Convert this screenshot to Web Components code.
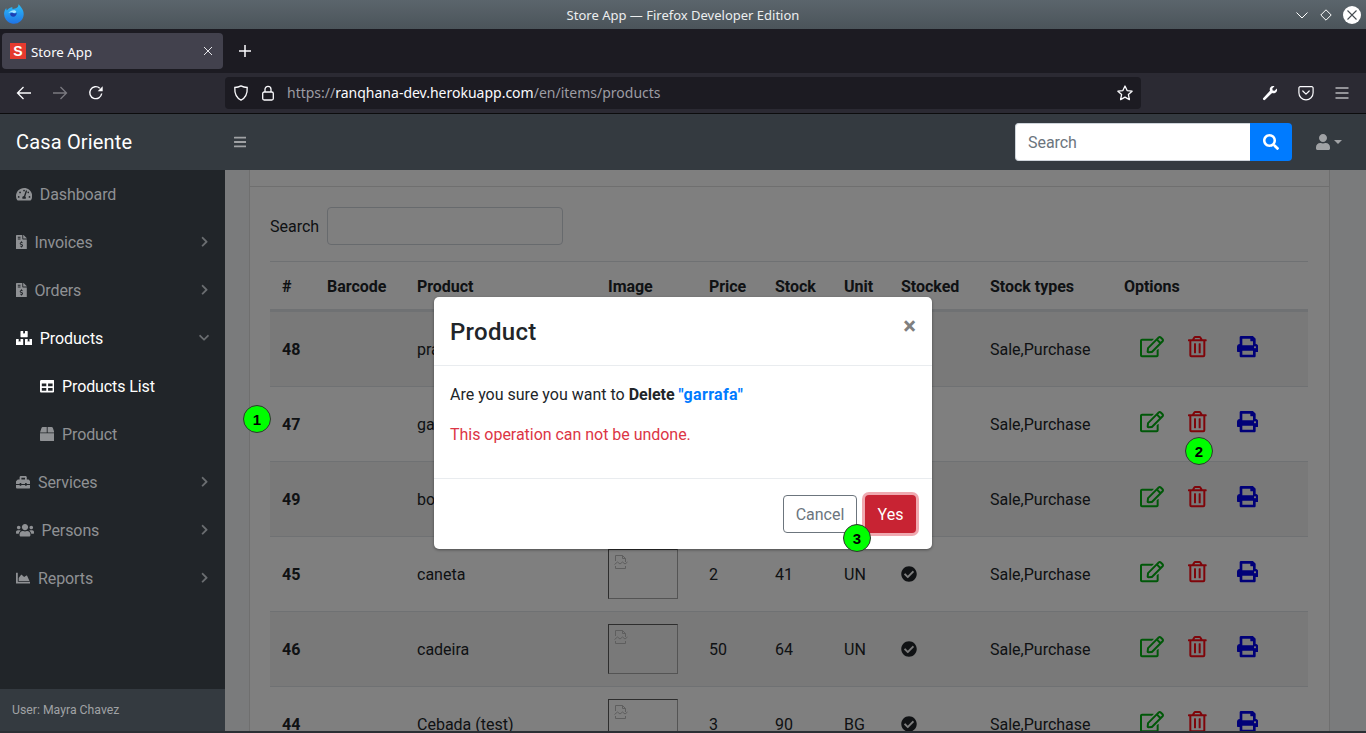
<!DOCTYPE html>
<html lang="en">
<head>
<meta charset="utf-8">
<title>Store App</title>
<style>
	html, body { margin: 0; height: 733px; overflow: hidden; background: #2b2f34; font-family: Roboto, "Liberation Sans", sans-serif; }
</style>
</head>
<body>
<browser-frame></browser-frame>
<app-shell>
	<app-navbar slot="top"></app-navbar>
	<app-sidebar slot="side">
		<side-item icon="tachometer" label="Dashboard"></side-item>
		<side-item icon="invoice" label="Invoices" arrow="right"></side-item>
		<side-item icon="invoice" label="Orders" arrow="right"></side-item>
		<side-item icon="boxes" label="Products" arrow="down" active></side-item>
		<side-item icon="table" label="Products List" sub active></side-item>
		<side-item icon="box" label="Product" sub></side-item>
		<side-item icon="toolbox" label="Services" arrow="right"></side-item>
		<side-item icon="users" label="Persons" arrow="right"></side-item>
		<side-item icon="chart" label="Reports" arrow="right"></side-item>
	</app-sidebar>
	<product-card></product-card>
	<confirm-modal slot="over"></confirm-modal>
	<step-badge slot="over" style="left:243px;top:291px">1</step-badge>
	<step-badge slot="over" style="left:1185px;top:323px">2</step-badge>
	<step-badge slot="over" style="left:843px;top:410px">3</step-badge>
</app-shell>
<script>
const ICONS = {
	bars: [448,"M16 132h416c8.837 0 16-7.163 16-16V76c0-8.837-7.163-16-16-16H16C7.163 60 0 67.163 0 76v40c0 8.837 7.163 16 16 16zm0 160h416c8.837 0 16-7.163 16-16v-40c0-8.837-7.163-16-16-16H16c-8.837 0-16 7.163-16 16v40c0 8.837 7.163 16 16 16zm0 160h416c8.837 0 16-7.163 16-16v-40c0-8.837-7.163-16-16-16H16c-8.837 0-16 7.163-16 16v40c0 8.837 7.163 16 16 16z"],
	search: [512,"M505 442.7L405.3 343c-4.5-4.5-10.6-7-17-7H372c27.6-35.3 44-79.7 44-128C416 93.1 322.9 0 208 0S0 93.1 0 208s93.1 208 208 208c48.3 0 92.7-16.4 128-44v16.3c0 6.4 2.5 12.5 7 17l99.7 99.7c9.4 9.4 24.6 9.4 33.9 0l28.3-28.3c9.4-9.4 9.4-24.6.1-34zM208 336c-70.7 0-128-57.2-128-128 0-70.7 57.2-128 128-128 70.7 0 128 57.2 128 128 0 70.7-57.2 128-128 128z"],
	user: [448,"M224 256c70.7 0 128-57.3 128-128S294.7 0 224 0 96 57.3 96 128s57.3 128 128 128zm89.6 32h-16.7c-22.2 10.2-46.9 16-72.9 16s-50.6-5.8-72.9-16h-16.7C60.2 288 0 348.2 0 422.4V464c0 26.5 21.5 48 48 48h352c26.5 0 48-21.5 48-48v-41.6c0-74.2-60.2-134.4-134.4-134.4z"],
	check: [512,"M504 256c0 136.967-111.033 248-248 248S8 392.967 8 256 119.033 8 256 8s248 111.033 248 248zM227.314 387.314l184-184c6.248-6.248 6.248-16.379 0-22.627l-22.627-22.627c-6.248-6.249-16.379-6.249-22.628 0L216 308.118l-70.059-70.059c-6.248-6.248-16.379-6.248-22.628 0l-22.627 22.627c-6.248 6.248-6.248 16.379 0 22.627l104 104c6.249 6.249 16.379 6.249 22.628.001z"],
	right: [320,"M285.476 272.971L91.132 467.314c-9.373 9.373-24.569 9.373-33.941 0l-22.667-22.667c-9.357-9.357-9.375-24.522-.04-33.901L188.505 256 34.484 101.255c-9.335-9.379-9.317-24.544.04-33.901l22.667-22.667c9.373-9.373 24.569-9.373 33.941 0L285.475 239.03c9.373 9.372 9.373 24.568.001 33.941z"],
	down: [448,"M207.029 381.476L12.686 187.132c-9.373-9.373-9.373-24.569 0-33.941l22.667-22.667c9.357-9.357 24.522-9.375 33.901-.04L224 284.505l154.745-154.021c9.379-9.335 24.544-9.317 33.901.04l22.667 22.667c9.373 9.373 9.373 24.569 0 33.941L240.971 381.476c-9.373 9.372-24.569 9.372-33.942 0z"],
	edit: [576,"M402.3 344.9l32-32c5-5 13.7-1.5 13.7 5.7V464c0 26.5-21.5 48-48 48H48c-26.5 0-48-21.5-48-48V112c0-26.5 21.5-48 48-48h273.5c7.1 0 10.7 8.6 5.7 13.7l-32 32c-1.5 1.5-3.5 2.3-5.7 2.3H48v352h352V350.5c0-2.1.8-4.1 2.3-5.6zm156.6-201.8L296.3 405.7l-90.4 10c-26.2 2.9-48.5-19.2-45.6-45.6l10-90.4L432.9 17.1c22.9-22.9 59.9-22.9 82.7 0l43.2 43.2c22.9 22.9 22.9 60 .1 82.8zM460.1 174L402 115.9 216.2 301.8l-7.3 65.3 65.3-7.3L460.1 174zm64.8-79.7l-43.2-43.2c-4.1-4.1-10.8-4.1-14.8 0L436 82l58.1 58.1 30.9-30.9c4-4.2 4-10.8-.1-14.9z"],
	trash: [448,"M268 416h24a12 12 0 0 0 12-12V188a12 12 0 0 0-12-12h-24a12 12 0 0 0-12 12v216a12 12 0 0 0 12 12zM432 80h-82.41l-34-56.7A48 48 0 0 0 274.41 0H173.59a48 48 0 0 0-41.16 23.3L98.41 80H16A16 16 0 0 0 0 96v16a16 16 0 0 0 16 16h16v336a48 48 0 0 0 48 48h288a48 48 0 0 0 48-48V128h16a16 16 0 0 0 16-16V96a16 16 0 0 0-16-16zM171.84 50.91A6 6 0 0 1 177 48h94a6 6 0 0 1 5.15 2.91L293.61 80H154.39zM368 464H80V128h288zm-212-48h24a12 12 0 0 0 12-12V188a12 12 0 0 0-12-12h-24a12 12 0 0 0-12 12v216a12 12 0 0 0 12 12z"],
	print: [512,"M448 192V77.25c0-8.49-3.37-16.62-9.37-22.63L393.37 9.37c-6-6-14.14-9.37-22.63-9.37H96C78.33 0 64 14.33 64 32v160c-35.35 0-64 28.65-64 64v112c0 8.84 7.16 16 16 16h48v96c0 17.67 14.33 32 32 32h320c17.67 0 32-14.33 32-32v-96h48c8.84 0 16-7.16 16-16V256c0-35.35-28.65-64-64-64zm-64 256H128v-96h256v96zm0-224H128V64h192v48c0 8.84 7.16 16 16 16h48v96zm48 72c-13.25 0-24-10.75-24-24 0-13.26 10.75-24 24-24s24 10.74 24 24c0 13.25-10.75 24-24 24z"],
	invoice: [384,"M377 105L279.1 7c-4.5-4.5-10.6-7-17-7H256v128h128v-6.1c0-6.3-2.5-12.4-7-16.9zm-153 31V0H24C10.7 0 0 10.7 0 24v464c0 13.3 10.7 24 24 24h336c13.3 0 24-10.7 24-24V160H248c-13.2 0-24-10.8-24-24zM64 72c0-4.42 3.58-8 8-8h80c4.42 0 8 3.58 8 8v16c0 4.42-3.58 8-8 8H72c-4.42 0-8-3.58-8-8V72zm0 80v-16c0-4.42 3.58-8 8-8h80c4.42 0 8 3.58 8 8v16c0 4.42-3.58 8-8 8H72c-4.42 0-8-3.58-8-8zm144 263.88V440c0 4.42-3.58 8-8 8h-16c-4.42 0-8-3.58-8-8v-24.29c-11.29-.58-22.27-4.52-31.37-11.35-3.9-2.93-4.1-8.77-.57-12.14l11.75-11.21c2.77-2.64 6.89-2.76 10.13-.73 3.87 2.42 8.26 3.72 12.82 3.72h28.11c6.5 0 11.8-5.92 11.8-13.19 0-5.95-3.61-11.19-8.77-12.73l-45-13.5c-18.59-5.58-31.58-23.42-31.58-43.39 0-24.52 19.05-44.44 42.67-45.07V232c0-4.42 3.58-8 8-8h16c4.42 0 8 3.58 8 8v24.29c11.29.58 22.27 4.51 31.37 11.35 3.9 2.93 4.1 8.77.57 12.14l-11.75 11.21c-2.77 2.64-6.89 2.76-10.13.73-3.87-2.43-8.26-3.72-12.82-3.72h-28.11c-6.5 0-11.8 5.92-11.8 13.19 0 5.95 3.61 11.19 8.77 12.73l45 13.5c18.59 5.58 31.58 23.42 31.58 43.39 0 24.53-19.05 44.44-42.67 45.07z"],
	tachometer: [576,"M288 32C128.94 32 0 160.94 0 320c0 52.8 14.25 102.26 39.06 144.8 5.61 9.62 16.3 15.2 27.44 15.2h443c11.14 0 21.83-5.58 27.44-15.2C561.75 422.26 576 372.8 576 320c0-159.06-128.94-288-288-288zm0 64c14.71 0 26.58 10.13 30.32 23.65-1.11 2.26-2.64 4.23-3.45 6.67l-9.22 27.67c-5.13 3.49-10.97 6.01-17.64 6.01-17.67 0-32-14.33-32-32S270.33 96 288 96zM96 384c-17.67 0-32-14.33-32-32s14.33-32 32-32 32 14.33 32 32-14.33 32-32 32zm48-160c-17.67 0-32-14.33-32-32s14.33-32 32-32 32 14.33 32 32-14.33 32-32 32zm246.77-72.41l-61.33 184C343.13 347.33 352 364.54 352 384c0 11.72-3.38 22.55-8.88 32H232.88c-5.5-9.45-8.88-20.28-8.88-32 0-33.94 26.5-61.43 59.9-63.59l61.34-184.01c4.17-12.56 17.73-19.45 30.36-15.17 12.57 4.19 19.35 17.77 15.17 30.36zm14.66 57.2l15.52-46.55c3.47-1.29 7.13-2.23 11.05-2.23 17.67 0 32 14.33 32 32s-14.33 32-32 32c-11.38-.01-20.89-6.28-26.57-15.22zM480 384c-17.67 0-32-14.33-32-32s14.33-32 32-32 32 14.33 32 32-14.33 32-32 32z"],
	boxes: [576,"M560 288h-80v96l-32-21.3-32 21.3v-96h-80c-8.8 0-16 7.2-16 16v192c0 8.8 7.2 16 16 16h224c8.8 0 16-7.2 16-16V304c0-8.8-7.2-16-16-16zm-384-64h224c8.8 0 16-7.2 16-16V16c0-8.8-7.2-16-16-16h-80v96l-32-21.3L256 96V0h-80c-8.8 0-16 7.2-16 16v192c0 8.8 7.2 16 16 16zm64 64h-80v96l-32-21.3L96 384v-96H16c-8.8 0-16 7.2-16 16v192c0 8.8 7.2 16 16 16h224c8.8 0 16-7.2 16-16V304c0-8.8-7.2-16-16-16z"],
	table: [512,"M464 32H48C21.49 32 0 53.49 0 80v352c0 26.51 21.49 48 48 48h416c26.51 0 48-21.49 48-48V80c0-26.51-21.49-48-48-48zM224 416H64v-96h160v96zm0-160H64v-96h160v96zm224 160H288v-96h160v96zm0-160H288v-96h160v96z"],
	box: [512,"M509.5 184.6L458.9 32.8C452.4 13.2 434.1 0 413.4 0H272v192h238.7c-.4-2.5-.4-5-1.2-7.4zM240 0H98.6c-20.7 0-39 13.2-45.5 32.8L2.5 184.6c-.8 2.4-.8 4.9-1.2 7.4H240V0zM0 224v240c0 26.5 21.5 48 48 48h416c26.5 0 48-21.5 48-48V224H0z"],
	toolbox: [512,"M502.63 214.63l-45.25-45.25c-6-6-14.14-9.37-22.63-9.37H384V80c0-26.51-21.49-48-48-48H176c-26.51 0-48 21.49-48 48v80H77.25c-8.49 0-16.62 3.37-22.63 9.37L9.37 214.63c-6 6-9.37 14.14-9.37 22.63V320h128v-16c0-8.84 7.16-16 16-16h32c8.84 0 16 7.16 16 16v16h128v-16c0-8.84 7.16-16 16-16h32c8.84 0 16 7.16 16 16v16h128v-82.75c0-8.48-3.37-16.62-9.37-22.62zM320 160H192V96h128v64zm64 208c0 8.84-7.16 16-16 16h-32c-8.84 0-16-7.16-16-16v-16H192v16c0 8.84-7.16 16-16 16h-32c-8.84 0-16-7.16-16-16v-16H0v96c0 17.67 14.33 32 32 32h448c17.67 0 32-14.33 32-32v-96H384v16z"],
	users: [640,"M96 224c35.3 0 64-28.7 64-64s-28.7-64-64-64-64 28.7-64 64 28.7 64 64 64zm448 0c35.3 0 64-28.7 64-64s-28.7-64-64-64-64 28.7-64 64 28.7 64 64 64zm32 32h-64c-17.6 0-33.5 7.1-45.1 18.6 40.3 22.1 68.9 62 75.1 109.4h66c17.7 0 32-14.3 32-32v-32c0-35.3-28.7-64-64-64zm-256 0c61.9 0 112-50.1 112-112S381.9 32 320 32 208 82.1 208 144s50.1 112 112 112zm76.8 32h-8.3c-20.8 10-43.9 16-68.5 16s-47.6-6-68.5-16h-8.3C179.6 288 128 339.6 128 403.2V432c0 26.5 21.5 48 48 48h288c26.5 0 48-21.5 48-48v-28.8c0-63.6-51.6-115.2-115.2-115.2zm-223.7-13.4C161.5 263.1 145.6 256 128 256H64c-35.3 0-64 28.7-64 64v32c0 17.7 14.3 32 32 32h65.9c6.3-47.4 34.9-87.3 75.2-109.4z"],
	chart: [512,"M500 384c6.6 0 12 5.4 12 12v40c0 6.6-5.4 12-12 12H12c-6.6 0-12-5.4-12-12V76c0-6.6 5.4-12 12-12h40c6.6 0 12 5.4 12 12v308h436zM96 352V248l86-112c5-7 15-7 20 0l86 80 85-56c8-5 18-2 22 6l85 186z"]
};

/** returns the svg markup of a named icon at the given font-size */
function icon(name,size){
	const [w,d] = ICONS[name];
	return `<svg width="${w/512*size}" height="${size}" viewBox="0 0 ${w} 512" fill="currentColor" style="display:block;flex:none"><path d="${d}"/></svg>`;
}

class BrowserFrame extends HTMLElement {
	constructor(){
		super();
		this.attachShadow({mode:"open"});
		this.shadowRoot.innerHTML = /*html*/`
			<style>
				:host {
					display: block;
					font-family: "Noto Sans", sans-serif;
					color: #fbfbfe;
				}
				svg { display: block; flex: none; }
				.title {
					height: 29px;
					display: flex;
					align-items: center;
					background: linear-gradient(#5b656c,#4b545a);
					position: relative;
				}
				.logo { margin: -1px 0 0 4px; }
				.title span {
					position: absolute;
					left: 0;
					right: 0;
					text-align: center;
					font-size: 13px;
					color: #eceeef;
				}
				.controls {
					margin-left: auto;
					display: flex;
					align-items: center;
					gap: 10px;
					padding-right: 5px;
				}
				.tabs {
					height: 44px;
					box-sizing: border-box;
					padding: 4px 2px;
					display: flex;
					align-items: center;
					background: #1c1b22;
				}
				.tab {
					width: 221px;
					height: 36px;
					box-sizing: border-box;
					padding: 0 10px 0 8px;
					display: flex;
					align-items: center;
					background: #42414d;
					border-radius: 4px;
					font-size: 13.3px;
				}
				.tab span { padding-top: 2px; }
				.fav {
					width: 16px;
					height: 16px;
					margin-right: 5px;
					background: #e53a2f;
					color: #fff;
					font: bold 14px/16px "Liberation Sans", sans-serif;
					text-align: center;
				}
				.tab .close { margin-left: auto; }
				.plus { margin-left: 14px; }
				.nav {
					height: 40px;
					box-sizing: border-box;
					padding: 4px 6px;
					display: flex;
					align-items: center;
					background: #2b2a33;
				}
				.btn {
					width: 36px;
					display: flex;
					justify-content: center;
				}
				.url {
					margin-left: 111px;
					width: 916px;
					height: 32px;
					box-sizing: border-box;
					padding: 0 8px;
					display: flex;
					align-items: center;
					background: #1c1b22;
					border-radius: 4px;
					font-size: 14px;
					color: #9c9ca3;
				}
				.url .shield { margin-right: 11px; }
				.url .lock { margin-right: 12px; }
				.url span { margin: -2px 0 0 -1px; }
				.url b { font-weight: 400; color: #fbfbfe; }
				.url .star { margin-left: auto; }
				.right { margin-left: 111px; display: flex; }
				.line { height: 1px; background: #0c0c0d; }
			</style>
			<div class="title">
				<svg class="logo" width="20" height="20" viewBox="0 0 20 20">
					<defs><linearGradient id="ff" x1="0" y1="0" x2="0" y2="1"><stop offset="0" stop-color="#2cc0f8"/><stop offset="1" stop-color="#1f73e6"/></linearGradient></defs>
					<path d="M14.500 0c.9 1.900 5.200 4.500 5.200 10a9.800 9.800 0 1 1-19.400-2c.4-1.600 1.200-3 2-3.900-.1 1 .1 1.800.6 2.400C4 4.700 6.300 3.200 8.500 3c-.4.800-.3 1.500.3 1.900 3.200-.1 6-1.700 5.700-4.900z" fill="url(#ff)"/>
					<path d="M6 9.700c1.200-1 2.500-1 3.500-.5 1.400.6 2.600.2 3.200-.7.100 2.400-1.300 4.300-3.500 4.300-1.700 0-2.900-1.500-3.200-3.100z" fill="#1d3fb5"/>
					<path d="M4.300 9.300c1.500-1.300 3.300-1.300 4.700-.6 1.400.6 2.600.2 3.300-.7-.2-1.200-1.300-1.800-2.500-1.700-2.300.2-4.400 1.200-5.500 3z" fill="#a6e6ff"/>
				</svg>
				<span>Store App — Firefox Developer Edition</span>
				<div class="controls">
					<svg width="14" height="14" viewBox="0 0 14 14" fill="none" stroke="#fff"><path d="M1.500 4.500 7 10l5.500-5.500"/></svg>
					<svg width="14" height="14" viewBox="0 0 14 14" fill="none" stroke="#fff"><path d="M7 1.800 12.200 7 7 12.200 1.800 7z"/></svg>
					<svg width="18" height="18" viewBox="0 0 18 18"><circle cx="9" cy="9" r="9" fill="#fff"/><path d="M4.500 4.500l9 9M13.500 4.500l-9 9" stroke="#454c51" stroke-width="1.100"/></svg>
				</div>
			</div>
			<div class="tabs">
				<div class="tab">
					<div class="fav">S</div>
					<span>Store App</span>
					<svg class="close" width="10" height="10" viewBox="0 0 10 10" stroke="#e6e6ea" stroke-width="1"><path d="M1 1l8 8M9 1l-8 8"/></svg>
				</div>
				<svg class="plus" width="16" height="16" viewBox="0 0 16 16" stroke="#fbfbfe" stroke-width="1.500"><path d="M8 2v12M2 8h12"/></svg>
			</div>
			<div class="nav">
				<div class="btn"><svg width="16" height="16" viewBox="0 0 16 16" fill="none" stroke="#fbfbfe" stroke-width="1.300"><path d="M15 8H1.500M7.500 2 1.500 8l6 6"/></svg></div>
				<div class="btn"><svg width="16" height="16" viewBox="0 0 16 16" fill="none" stroke="#7b7a80" stroke-width="1.300"><path d="M1 8h13.500M8.500 2l6 6-6 6"/></svg></div>
				<div class="btn"><svg width="16" height="16" viewBox="0 0 16 16" fill="none" stroke="#fbfbfe" stroke-width="1.400"><path d="M13.700 8.500A6 6 0 1 1 11.800 3.200"/><path d="M14.700 1.200v5h-5z" fill="#fbfbfe" stroke="none"/></svg></div>
				<div class="url">
					<svg class="shield" width="16" height="16" viewBox="0 0 16 16" fill="none" stroke="#fbfbfe" stroke-width="1.300"><path d="M8 .9c2 1.100 3.700 1.500 6.200 1.600.3 5.600-1.500 10.300-6.200 12.600C3.300 12.800 1.500 8.100 1.800 2.500 4.300 2.400 6 2 8 .9z"/></svg>
					<svg class="lock" width="16" height="16" viewBox="0 0 16 16" fill="none" stroke="#fbfbfe" stroke-width="1.300"><rect x="2.700" y="7" width="10.600" height="8" rx="1.500"/><path d="M5 7V4.300a3 3 0 0 1 6 0V7"/></svg>
					<span>https://<b>ranqhana-dev.herokuapp.com</b>/en/items/products</span>
					<svg class="star" width="16" height="16" viewBox="0 0 16 16" fill="none" stroke="#fbfbfe" stroke-width="1.300" stroke-linejoin="round"><path d="M8 1l2.100 4.600 5 .6-3.700 3.400 1 5-4.400-2.500-4.400 2.500 1-5L.9 6.200l5-.6z"/></svg>
				</div>
				<div class="right">
					<div class="btn"><svg width="16" height="16" viewBox="0 0 16 16" fill="#fbfbfe"><path d="M14.800 3.600 12.600 5.800 10.700 5.400 10.300 3.500 12.500 1.300C10.500.6 8.600 1.300 8 2.900 7.600 3.900 7.700 4.900 8 5.700L1.300 13a1.200 1.200 0 0 0 1.800 1.700l7-6.800c.9.400 1.900.400 2.900 0 1.800-.8 2.500-2.500 1.800-4.300z"/></svg></div>
					<div class="btn"><svg width="16" height="16" viewBox="0 0 16 16" fill="none" stroke="#fbfbfe" stroke-width="1.200" stroke-linejoin="round"><path d="M2.200 1.700h11.600a1.300 1.300 0 0 1 1.300 1.300v4.700a7.100 7.100 0 0 1-14.200 0V3a1.300 1.300 0 0 1 1.300-1.300z"/><path d="M4.800 6 8 9.200 11.200 6" stroke-linecap="round"/></svg></div>
					<div class="btn"><svg width="16" height="16" viewBox="0 0 16 16" stroke="#fbfbfe" stroke-width="1.200"><path d="M1.500 3h13M1.500 8h13M1.500 13h13"/></svg></div>
				</div>
			</div>
			<div class="line"></div>
		`;
	}
}
customElements.define("browser-frame",BrowserFrame);

class AppShell extends HTMLElement {
	constructor(){
		super();
		this.attachShadow({mode:"open"});
		this.shadowRoot.innerHTML = /*html*/`
			<style>
				:host {
					display: block;
					position: relative;
					font-family: Roboto, "Liberation Sans", sans-serif;
					font-size: 16px;
					color: #212529;
				}
				.row {
					display: flex;
					height: 561px;
				}
				.main {
					flex: 1;
					position: relative;
					overflow: hidden;
					background: #f4f6f9;
				}
				.backdrop {
					position: absolute;
					inset: 0;
					background: #000;
					opacity: .5;
				}
			</style>
			<slot name="top"></slot>
			<div class="row">
				<slot name="side"></slot>
				<div class="main">
					<slot></slot>
					<div class="backdrop"></div>
				</div>
			</div>
			<slot name="over"></slot>
		`;
	}
}
customElements.define("app-shell",AppShell);

class AppNavbar extends HTMLElement {
	constructor(){
		super();
		this.attachShadow({mode:"open"});
		this.shadowRoot.innerHTML = /*html*/`
			<style>
				:host {
					display: flex;
					align-items: center;
					height: 56px;
					background: #343a40;
				}
				.brand {
					width: 209px;
					padding-left: 16px;
					font-size: 20px;
					letter-spacing: .17px;
					color: #fff;
				}
				.bars { margin-left: 9px; color: #a0a2a5; }
				.search {
					margin-left: auto;
					display: flex;
					width: 277px;
					height: 38px;
				}
				.field {
					flex: 1;
					box-sizing: border-box;
					padding-left: 12px;
					display: flex;
					align-items: center;
					background: #fff;
					border: 1px solid #ced4da;
					border-right: 0;
					border-radius: 4px 0 0 4px;
					color: #6c757d;
					letter-spacing: -.05px;
				}
				.go {
					width: 42px;
					display: flex;
					align-items: center;
					justify-content: center;
					background: #007bff;
					color: #fff;
					border-radius: 0 4px 4px 0;
				}
				.user {
					margin: 0 24px;
					display: flex;
					align-items: center;
					color: #a0a2a5;
				}
				.caret {
					margin-left: 4px;
					border-top: 4.8px solid;
					border-left: 4.8px solid transparent;
					border-right: 4.8px solid transparent;
				}
			</style>
			<div class="brand">Casa Oriente</div>
			<div class="bars">${icon("bars",14)}</div>
			<div class="search">
				<div class="field">Search</div>
				<div class="go">${icon("search",16)}</div>
			</div>
			<div class="user">${icon("user",16)}<div class="caret"></div></div>
		`;
	}
}
customElements.define("app-navbar",AppNavbar);

class AppSidebar extends HTMLElement {
	constructor(){
		super();
		this.attachShadow({mode:"open"});
		this.shadowRoot.innerHTML = /*html*/`
			<style>
				:host {
					display: flex;
					flex-direction: column;
					width: 225px;
					height: 100%;
					background: #212529;
				}
				nav { flex: 1; }
				footer {
					height: 42px;
					box-sizing: border-box;
					padding-left: 12px;
					display: flex;
					align-items: center;
					background: #343a40;
					font-size: 12.25px;
					color: #a0a2a5;
				}
			</style>
			<nav><slot></slot></nav>
			<footer>User: Mayra Chavez</footer>
		`;
	}
}
customElements.define("app-sidebar",AppSidebar);

class SideItem extends HTMLElement {
	constructor(){
		super();
		this.attachShadow({mode:"open"});
	}
	connectedCallback(){
		const arrow = this.getAttribute("arrow");
		this.shadowRoot.innerHTML = /*html*/`
			<style>
				:host {
					display: flex;
					align-items: center;
					height: 48px;
					box-sizing: border-box;
					padding: 0 16px;
					color: #8f9194;
				}
				:host([sub]) { padding-left: 40px; }
				:host([active]) { color: #fff; }
				.label { margin-left: 7.6px; letter-spacing: -.1px; }
				.arrow { margin-left: auto; color: #6a6d70; display: flex; width: 10px; justify-content: center; position: relative; left: .5px; }
			</style>
			${icon(this.getAttribute("icon"),14.4)}
			<span class="label">${this.getAttribute("label")}</span>
			${arrow ? `<span class="arrow">${icon(arrow,11.5)}</span>` : ""}
		`;
	}
}
customElements.define("side-item",SideItem);

class ProductCard extends HTMLElement {
	constructor(){
		super();
		this.attachShadow({mode:"open"});
		this.shadowRoot.innerHTML = /*html*/`
			<style>
				:host {
					display: block;
					box-sizing: border-box;
					margin: 0 36px 0 24px;
					height: 800px;
					background: #fff;
					border: 1px solid #dfdfdf;
					border-top: 0;
				}
				.cap { height: 16px; border-bottom: 1px solid #dfdfdf; }
				.body { padding: 20px 20px 0; }
				.filter {
					display: flex;
					align-items: center;
					gap: 8px;
					height: 38px;
					margin-bottom: 16px;
				}
				.box {
					width: 236px;
					height: 38px;
					box-sizing: border-box;
					background: #fff;
					border: 1px solid #ced4da;
					border-radius: 4px;
				}
			</style>
			<div class="cap"></div>
			<div class="body">
				<div class="filter"><span>Search</span><div class="box"></div></div>
				<product-table></product-table>
			</div>
		`;
	}
}
customElements.define("product-card",ProductCard);

class ProductTable extends HTMLElement {
	constructor(){
		super();
		this.attachShadow({mode:"open"});
		const heads = ["#","Barcode","Product","Image","Price","Stock","Unit","Stocked","Stock types","Options"];
		const widths = [45,90,191,101,66,69,57,89,134,196];
		// the first three rows lie under the dialog: only what shows is filled in
		const rows = [
			[48,"pra"],
			[47,"ga"],
			[49,"bo"],
			[45,"caneta",2,41,"UN"],
			[46,"cadeira",50,64,"UN"],
			[44,"Cebada (test)",3,90,"BG"]
		];
		const broken = `<div class="img"><svg width="14" height="16" viewBox="0 0 14 16" fill="none" stroke="#bdbdbd"><path d="M1.500 7V1.500h7l3 3V8M8.500 1.500v3h3M1.500 12v2.500h10V12M.5 10.500l3-2.500 2.500 2 2.500-2 2.500 2 2.500-2"/></svg></div>`;
		this.shadowRoot.innerHTML = /*html*/`
			<style>
				:host { display: block; }
				table {
					width: 1038px;
					table-layout: fixed;
					border-collapse: separate;
					border-spacing: 0;
					color: #212529;
				}
				th, td {
					box-sizing: border-box;
					padding: 0 12px;
					text-align: left;
					white-space: nowrap;
				}
				th {
					height: 50px;
					padding-top: 2px;
					font-weight: 700;
					letter-spacing: -.03px;
					border-top: 1px solid #dee2e6;
					border-bottom: 2px solid #dee2e6;
				}
				td {
					height: 75px;
					border-top: 1px solid #dee2e6;
				}
				td:first-child { font-weight: 700; }
				tr:nth-child(odd) td { background: rgba(0,0,0,.05); }
				.img {
					width: 70px;
					height: 50px;
					box-sizing: border-box;
					padding: 4px 0 0 5px;
					border: 1px solid;
					border-color: #5a5a5a #a8a8a8 #a8a8a8 #5a5a5a;
				}
				.img svg { display: block; }
				.ops {
					display: flex;
					align-items: center;
					padding-left: 16px;
					margin-bottom: 4px;
				}
				.edit { color: #00b010; margin-right: 24px; }
				.trash { color: #ff0a14; margin-right: 30.5px; }
				.print { color: #0000f0; }
			</style>
			<table>
				<colgroup>${widths.map(w=>`<col style="width:${w}px">`).join("")}</colgroup>
				<thead><tr>${heads.map(h=>`<th>${h}</th>`).join("")}</tr></thead>
				<tbody>
					${rows.map(r=>`<tr>
						<td>${r[0]}</td>
						<td></td>
						<td>${r[1]}</td>
						<td>${broken}</td>
						<td>${r[2]??""}</td>
						<td>${r[3]??""}</td>
						<td>${r[4]??""}</td>
						<td>${r[2]?icon("check",16):""}</td>
						<td>Sale,Purchase</td>
						<td><div class="ops">
							<span class="edit">${icon("edit",21.33)}</span>
							<span class="trash">${icon("trash",21.33)}</span>
							<span class="print">${icon("print",21.33)}</span>
						</div></td>
					</tr>`).join("")}
				</tbody>
			</table>
		`;
	}
}
customElements.define("product-table",ProductTable);

class ConfirmModal extends HTMLElement {
	constructor(){
		super();
		this.attachShadow({mode:"open"});
		this.shadowRoot.innerHTML = /*html*/`
			<style>
				:host {
					display: block;
					position: absolute;
					left: 434px;
					top: 183px;
					width: 498px;
					background: #fff;
					border-radius: 5px;
					box-shadow: 0 1px 3px rgba(0,0,0,.4);
					color: #212529;
				}
				header {
					height: 69px;
					box-sizing: border-box;
					padding: 17px 16px 0;
					display: flex;
					justify-content: space-between;
					border-bottom: 1px solid #e9ecef;
				}
				h5 {
					margin: 0;
					font-size: 24px;
					font-weight: 500;
					line-height: 36px;
					letter-spacing: .28px;
				}
				.x {
					margin: 0 0 0 0;
					font-size: 24px;
					font-weight: 700;
					line-height: 24px;
					color: #7f7f7f;
				}
				.body { padding: 17px 16px 0; height: 112px; box-sizing: border-box; }
				p { margin: 0 0 16px; line-height: 24px; }
				b { font-weight: 700; }
				.name { color: #007bff; letter-spacing: .35px; }
				.warn { color: #dc3545; letter-spacing: -.03px; }
				footer {
					padding: 16px;
					display: flex;
					justify-content: flex-end;
					gap: 8px;
					border-top: 1px solid #e9ecef;
				}
				.btn {
					height: 38px;
					box-sizing: border-box;
					padding: 0 12px;
					display: flex;
					align-items: center;
					border-radius: 4px;
				}
				.cancel { border: 1px solid #6c757d; color: #6c757d; width: 74px; justify-content: center; }
				.yes {
					width: 51px;
					justify-content: center;
					padding: 0;
					background: #c82333;
					color: #fff;
					box-shadow: 0 0 0 3px rgba(225,83,97,.5);
				}
			</style>
			<header><h5>Product</h5><span class="x">×</span></header>
			<div class="body">
				<p>Are you sure you want to <b>Delete</b> <b class="name">"garrafa"</b></p>
				<p class="warn">This operation can not be undone.</p>
			</div>
			<footer><div class="btn cancel">Cancel</div><div class="btn yes">Yes</div></footer>
		`;
	}
}
customElements.define("confirm-modal",ConfirmModal);

class StepBadge extends HTMLElement {
	constructor(){
		super();
		this.attachShadow({mode:"open"});
		this.shadowRoot.innerHTML = /*html*/`
			<style>
				:host {
					display: flex;
					position: absolute;
					width: 28px;
					height: 28px;
					box-sizing: border-box;
					align-items: center;
					justify-content: center;
					background: #00ff00;
					border: 1px solid #333;
					border-radius: 50%;
					font-family: "Liberation Sans", sans-serif;
					font-size: 15px;
					font-weight: 700;
					color: #000;
				}
			</style>
			<slot></slot>
		`;
	}
}
customElements.define("step-badge",StepBadge);
</script>
</body>
</html>
